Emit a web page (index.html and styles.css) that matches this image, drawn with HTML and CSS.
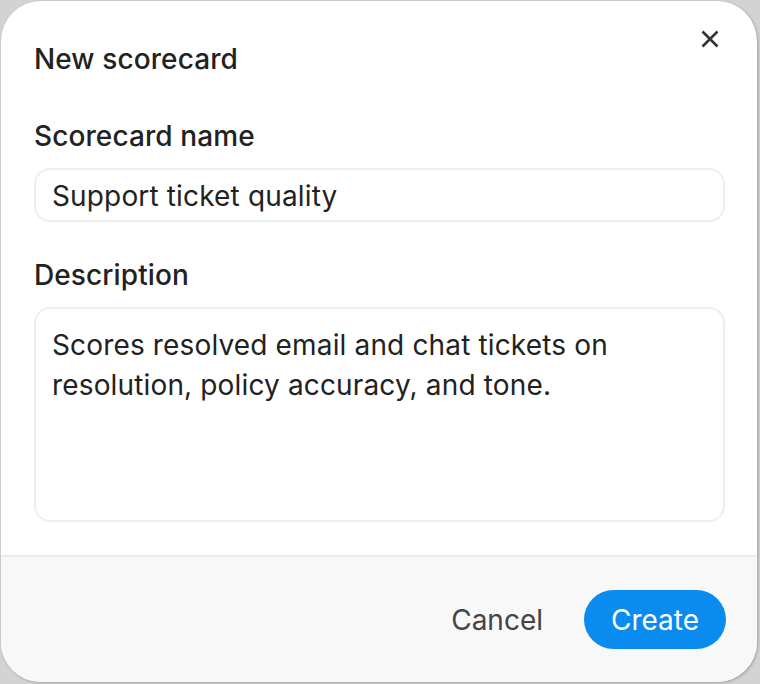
FILE: index.html
```html
<!DOCTYPE html>
<html lang="en">
<head>
<meta charset="utf-8">
<title>New scorecard</title>
<link rel="stylesheet" href="styles.css">
</head>
<body>
<div class="dialog">
  <div class="body">
    <div class="head">
      <h1 class="title">New scorecard</h1>
      <button class="close" aria-label="Close">
        <svg width="18" height="18" viewBox="0 0 18 18"><path d="M1.5 1.5 L16.5 16.5 M16.5 1.5 L1.5 16.5" stroke="#333" stroke-width="2.6" stroke-linecap="butt"/></svg>
      </button>
    </div>
    <label class="label" for="name">Scorecard name</label>
    <input id="name" class="field" type="text" value="Support ticket quality">
    <label class="label desc-label" for="desc">Description</label>
    <textarea id="desc" class="field area">Scores resolved email and chat tickets on resolution, policy accuracy, and tone.</textarea>
  </div>
  <div class="footer">
    <button class="btn cancel">Cancel</button>
    <button class="btn create">Create</button>
  </div>
</div>
</body>
</html>
```
FILE: styles.css
```css
html, body {
  margin: 0;
  padding: 0;
  background: #d3d3d3;
}
body {
  width: 760px;
  height: 684px;
  overflow: hidden;
  font-family: Inter, "Noto Sans", sans-serif;
  color: #222;
}
.dialog {
  margin: 1px 0 0 1px;
  width: 756px;
  height: 681px;
  background: #fff;
  border-radius: 40px;
  box-shadow: 1px 1px 3px rgba(0,0,0,0.25);
  overflow: hidden;
  display: flex;
  flex-direction: column;
  box-sizing: border-box;
}
.body {
  padding: 0 32px 0 33px;
  display: flex;
  flex-direction: column;
  flex: 1;
}
.head {
  display: flex;
  justify-content: space-between;
  align-items: flex-start;
  padding-top: 40px;
}
.title {
  margin: 0;
  font-size: 28px;
  line-height: 36px;
  font-weight: 500;
  letter-spacing: 0.1px;
  color: #222;
}
.close {
  border: 0;
  background: none;
  padding: 0;
  margin: -11px 6px 0 0;
  width: 18px;
  height: 18px;
  display: flex;
  cursor: pointer;
}
.label {
  margin-top: 41px;
  font-size: 28px;
  line-height: 36px;
  font-weight: 500;
  letter-spacing: 0.1px;
  color: #222;
}
.desc-label {
  margin-top: 35px;
}
.field {
  margin-top: 14px;
  box-sizing: border-box;
  width: 100%;
  height: 54px;
  border: 2px solid #eeeeee;
  border-radius: 16px;
  background: #fff;
  padding: 1px 16px 0;
  font-family: Inter, "Noto Sans", sans-serif;
  font-size: 28px;
  letter-spacing: 0.15px;
  color: #222;
  outline: none;
}
.area {
  height: 215px;
  resize: none;
  padding: 16px 16px;
  line-height: 40px;
  overflow: hidden;
  display: block;
}
.footer {
  height: 127px;
  box-sizing: border-box;
  background: #f8f8f8;
  border-top: 2px solid #ececec;
  display: flex;
  justify-content: flex-end;
  align-items: center;
  gap: 21px;
  padding: 0 31px 0 34px;
}
.btn {
  font-family: Inter, "Noto Sans", sans-serif;
  font-size: 28px;
  border: 0;
  cursor: pointer;
}
.cancel {
  background: none;
  color: #444;
  padding: 0 20px;
  height: 59px;
}
.create {
  background: #0a8bef;
  color: #fff;
  width: 142px;
  height: 59px;
  border-radius: 30px;
  padding: 0;
}
```
